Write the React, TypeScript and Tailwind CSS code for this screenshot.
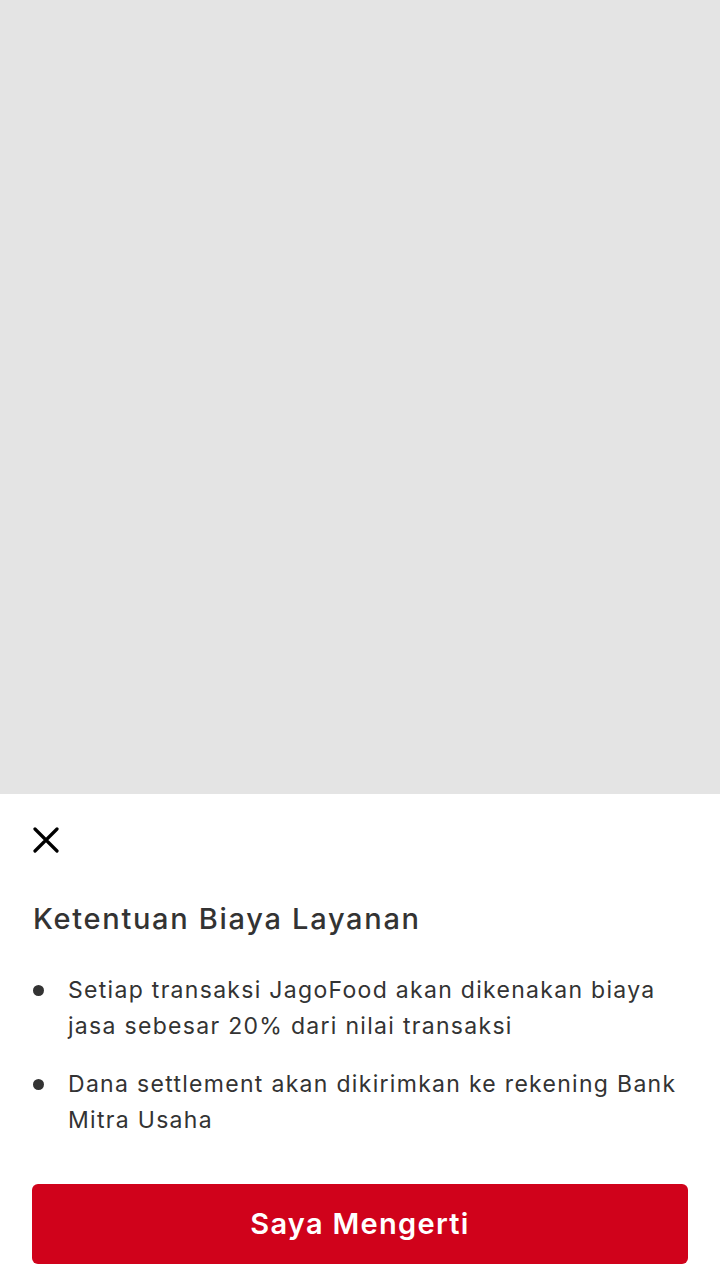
export default function App() {
  const points = [
    "Setiap transaksi JagoFood akan dikenakan biaya jasa sebesar 20% dari nilai transaksi",
    "Dana settlement akan dikirimkan ke rekening Bank Mitra Usaha",
  ];

  return (
    <div
      className="w-[720px] h-[1280px] flex flex-col bg-[#e4e4e4]"
      style={{ fontFamily: 'Inter, "Liberation Sans", sans-serif' }}
    >
      <div className="flex-1" />

      {/* Bottom sheet */}
      <div className="bg-white px-8 pt-[33px] pb-4 flex flex-col">
        <button className="w-[26px] h-[26px] ml-px">
          <svg viewBox="0 0 26 26" className="w-[26px] h-[26px]">
            <path d="M2 2 L24 24 M24 2 L2 24" stroke="#000" strokeWidth="3.2" strokeLinecap="round" />
          </svg>
        </button>

        <h2 className="mt-[46px] text-[29px] leading-[40px] font-medium tracking-[1.7px] text-[#333333] ml-px">
          Ketentuan Biaya Layanan
        </h2>

        <ul className="mt-[33px] flex flex-col gap-[22px]">
          {points.map((p) => (
            <li key={p} className="flex text-[23px] leading-[36px] text-[#333333]">
              <span className="w-9 shrink-0 flex pt-[13px]">
                <span className="w-[11px] h-[11px] rounded-full bg-[#333333] ml-px" />
              </span>
              <span className="tracking-[1.3px]">{p}</span>
            </li>
          ))}
        </ul>

        <button className="mt-[46px] h-20 w-full rounded-md bg-[#d0021b] text-white text-[29px] font-semibold tracking-[1.3px]">
          Saya Mengerti
        </button>
      </div>
    </div>
  );
}
